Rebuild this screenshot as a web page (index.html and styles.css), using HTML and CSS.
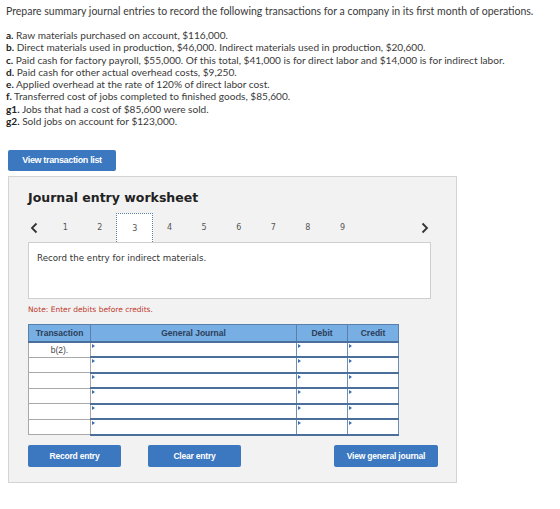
FILE: index.html
```html
<!DOCTYPE html>
<html>
<head>
<meta charset="utf-8">
<link rel="stylesheet" href="styles.css">
</head>
<body>
<div class="intro">Prepare summary journal entries to record the following transactions for a company in its first month of operations.</div>
<div class="items">
  <div><b>a.</b> Raw materials purchased on account, $116,000.</div>
  <div><b>b.</b> Direct materials used in production, $46,000. Indirect materials used in production, $20,600.</div>
  <div><b>c.</b> Paid cash for factory payroll, $55,000. Of this total, $41,000 is for direct labor and $14,000 is for indirect labor.</div>
  <div><b>d.</b> Paid cash for other actual overhead costs, $9,250.</div>
  <div><b>e.</b> Applied overhead at the rate of 120% of direct labor cost.</div>
  <div><b>f.</b> Transferred cost of jobs completed to finished goods, $85,600.</div>
  <div><b>g1.</b> Jobs that had a cost of $85,600 were sold.</div>
  <div><b>g2.</b> Sold jobs on account for $123,000.</div>
</div>
<div class="btn-row-top"><span class="btn btn-list">View transaction list</span></div>
<div class="panel">
  <div class="title">Journal entry worksheet</div>
  <div class="tabs">
    <span class="arrow">
      <svg width="8" height="12" viewBox="0 0 8 12"><path d="M6.5 1.5 L2 6 L6.5 10.5" fill="none" stroke="#333" stroke-width="1.8"/></svg>
    </span>
    <span class="tab">1</span>
    <span class="tab">2</span>
    <span class="tab active">3</span>
    <span class="tab">4</span>
    <span class="tab">5</span>
    <span class="tab">6</span>
    <span class="tab">7</span>
    <span class="tab">8</span>
    <span class="tab">9</span>
    <span class="spacer"></span>
    <span class="arrow right">
      <svg width="8" height="12" viewBox="0 0 8 12"><path d="M1.5 1.5 L6 6 L1.5 10.5" fill="none" stroke="#333" stroke-width="1.8"/></svg>
    </span>
  </div>
  <div class="prompt">Record the entry for indirect materials.</div>
  <div class="note">Note: Enter debits before credits.</div>
  <table class="journal">
    <thead>
      <tr><th class="c-trans">Transaction</th><th class="c-gj">General Journal</th><th class="c-amt">Debit</th><th class="c-amt">Credit</th></tr>
    </thead>
    <tbody>
      <tr><td class="trans">b(2).</td><td class="inp"></td><td class="inp"></td><td class="inp"></td></tr>
      <tr><td class="trans"></td><td class="inp"></td><td class="inp"></td><td class="inp"></td></tr>
      <tr><td class="trans"></td><td class="inp"></td><td class="inp"></td><td class="inp"></td></tr>
      <tr><td class="trans"></td><td class="inp"></td><td class="inp"></td><td class="inp"></td></tr>
      <tr><td class="trans"></td><td class="inp"></td><td class="inp"></td><td class="inp"></td></tr>
      <tr><td class="trans"></td><td class="inp"></td><td class="inp"></td><td class="inp"></td></tr>
    </tbody>
  </table>
  <div class="actions">
    <span class="btn btn-act">Record entry</span>
    <span class="btn btn-act">Clear entry</span>
    <span class="spacer"></span>
    <span class="btn btn-view">View general journal</span>
  </div>
</div>
</body>
</html>
```

FILE: styles.css
```css
html, body {
  margin: 0;
  padding: 0;
  background: #fff;
}
body {
  font-family: "Lato", "Open Sans", sans-serif;
  color: #333;
  width: 560px;
  height: 509px;
  overflow: hidden;
}
.intro {
  font-size: 10.5px;
  line-height: 12px;
  padding: 5px 0 0 6px;
  color: #3a3a3a;
}
.items {
  font-size: 10.1px;
  line-height: 12.3px;
  padding: 12px 0 0 6px;
  color: #3a3a3a;
}
.items b {
  font-weight: 700;
  color: #222;
}
.btn-row-top {
  padding: 20px 0 0 8px;
  height: 21px;
}
.btn {
  display: inline-flex;
  align-items: center;
  justify-content: center;
  background: #3b78c0;
  color: #fff;
  font-family: "Liberation Sans", Arial, sans-serif;
  font-weight: 700;
  font-size: 8.5px;
  letter-spacing: -0.2px;
  border-radius: 2px;
  box-sizing: border-box;
}
.btn-list {
  width: 108px;
  height: 21px;
  font-size: 9px;
  letter-spacing: -0.35px;
}
.panel {
  margin: 8px 0 0 8px;
  width: 449px;
  height: 307px;
  box-sizing: border-box;
  background: #f2f2f2;
  border: 1px solid #d4d4d4;
  padding: 13px 25px 0 19px;
  font-family: "DejaVu Sans", Verdana, sans-serif;
}
.title {
  font-weight: 700;
  font-size: 12.5px;
  color: #222;
  line-height: 16px;
  height: 23px;
}
.tabs {
  display: flex;
  align-items: stretch;
  height: 29px;
  font-size: 8px;
  color: #555;
}
.arrow {
  width: 20px;
  display: flex;
  align-items: center;
  padding-left: 2px;
  box-sizing: border-box;
}
.arrow.right {
  width: 10px;
  padding-left: 0;
}
.tab {
  width: 34.6px;
  display: flex;
  align-items: center;
  justify-content: center;
  box-sizing: border-box;
}
.tab.active {
  background: #fff;
  border: 1px dotted #5a7fa8;
  border-bottom: none;
  width: 37px;
  margin: 0 -1px;
}
.tabs .spacer {
  flex: 1;
}
.prompt {
  background: #fff;
  border: 1px solid #cfcfcf;
  width: 403px;
  height: 57px;
  box-sizing: border-box;
  font-size: 8.7px;
  color: #333;
  padding: 10px 0 0 8px;
}
.note {
  color: #c0392b;
  font-size: 7.5px;
  line-height: 10px;
  padding-top: 6px;
  height: 21px;
  box-sizing: border-box;
}
.journal {
  border-collapse: collapse;
  width: 370px;
  margin-top: 4px;
  table-layout: fixed;
  font-family: "Liberation Sans", Arial, sans-serif;
}
.journal th {
  background: #77aee3;
  color: #2c3e5a;
  font-size: 8.5px;
  font-weight: 700;
  height: 17px;
  padding: 0;
  border: 1px solid #5a7fa8;
  border-bottom: 2px solid #4a6f9a;
  box-sizing: border-box;
}
.c-trans { width: 62px; }
.c-gj { width: 206px; }
.c-amt { width: 51px; }
.journal td {
  height: 15.5px;
  padding: 0;
  box-sizing: border-box;
  background: #fff;
}
.journal td.trans {
  border: 1px solid #a8a8a8;
  font-size: 8.5px;
  color: #444;
  text-align: center;
}
.journal td.inp {
  border: 1px solid #6d8fb5;
  border-bottom: 2px solid #4a6f9a;
  position: relative;
}
.journal td.inp::before {
  content: "";
  position: absolute;
  left: 1px;
  top: 1px;
  border-left: 3px solid #3a6fb0;
  border-top: 2px solid transparent;
  border-bottom: 2px solid transparent;
}
.actions {
  display: flex;
  margin-top: 9px;
  width: 410px;
}
.actions .spacer {
  flex: 1;
}
.btn-act {
  width: 93px;
  height: 22px;
  margin-right: 27px;
}
.btn-view {
  width: 104px;
  height: 22px;
}
```
